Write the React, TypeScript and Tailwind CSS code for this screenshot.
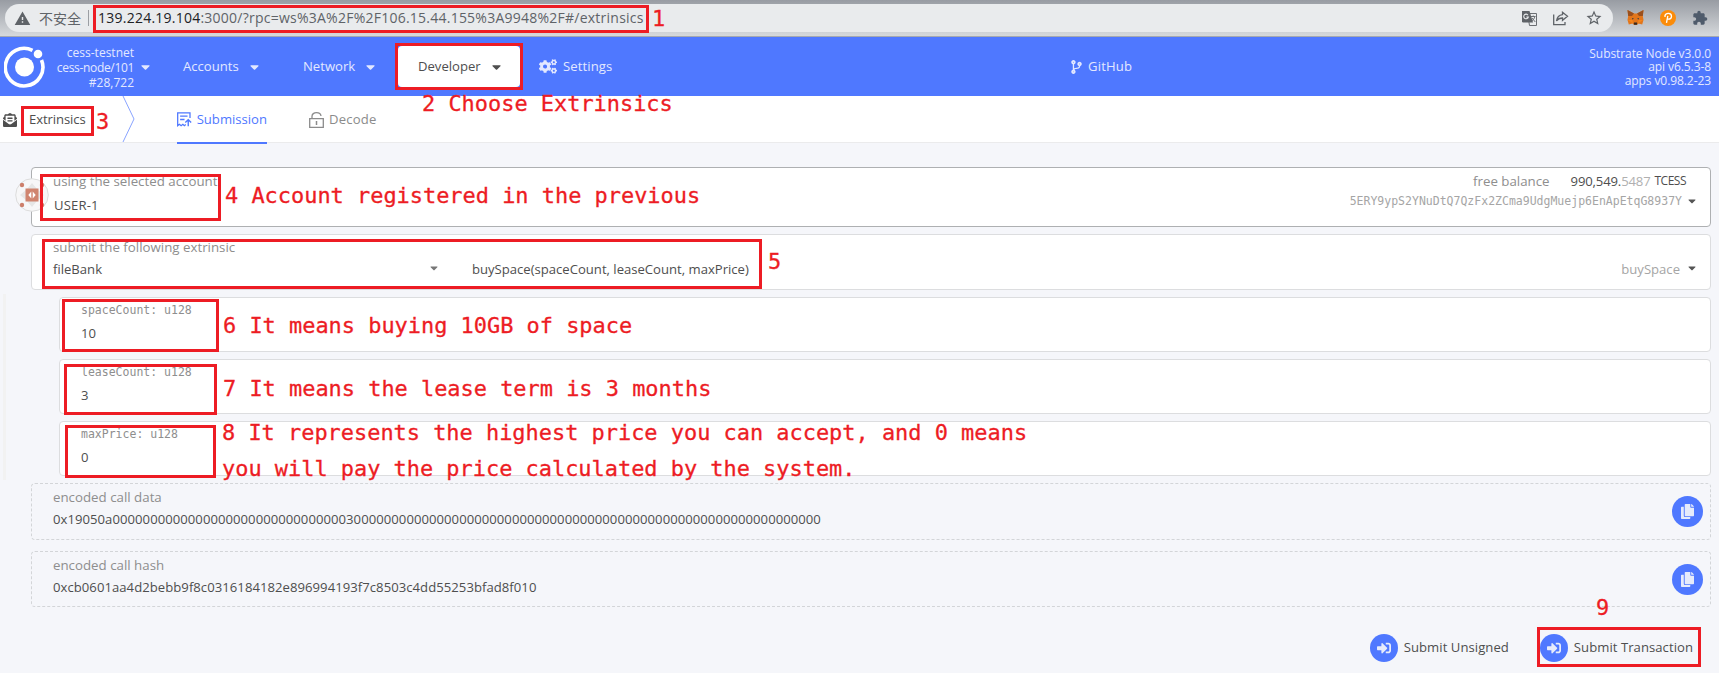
import React from 'react';
import { FaCaretDown, FaCodeBranch, FaCogs, FaCopy, FaEnvelopeOpenText, FaSignInAlt } from 'react-icons/fa';
import { MdExtension, MdStarBorder, MdWarning } from 'react-icons/md';

const CALL_DATA = '0x19050a' + '0'.repeat(31) + '3' + '0'.repeat(62);
const CALL_HASH = '0xcb0601aa4d2bebb9f8c0316184182e896994193f7c8503c4dd55253bfad8f010';

function TranslateIcon() {
  return (
    <svg className="h-[15px] w-[15px]" viewBox="0 0 15 15">
      <path d="M5.5 2.5h9v12h-7z" fill="none" stroke="#6b6e73" />
      <path d="M0 0h7.5l3.5 11.5H1.200A1.200 1.200 0 0 1 0 10.300z" fill="#5f6368" />
      <path d="M6 4.200A2.300 2.300 0 1 0 6.300 6H4.300" fill="none" stroke="#e9ebed" strokeWidth="1.100" />
      <path d="M9 5.500h4.500M11.200 4.500v1M12.800 5.500c-.4 2-1.500 3.500-3 4.500M10 7l3.300 4" fill="none" stroke="#6b6e73" />
    </svg>
  );
}

function ShareIcon() {
  return (
    <svg className="h-[15px] w-[16px]" viewBox="0 0 16 15">
      <path
        d="M.7 3.500V13.700H12V11M9.500 1.300l5 4-5 4V7C6.500 7 4.800 8 3.500 10 4 6.500 6 4 9.500 3.600z"
        fill="none"
        stroke="#5f6368"
        strokeWidth="1.300"
      />
    </svg>
  );
}

function FoxIcon() {
  return (
    <svg className="h-[16px] w-[17px]" viewBox="0 0 17 16">
      <path d="M.5 0 7 3.500h3L16.500 0l-.7 6 .7 4-1.300 4.500-3.700-1L9.800 15H7.200l-1.700-1.500-3.700 1L.5 10l.7-4z" fill="#e2761b" />
      <path d="M.5 0 7 3.500 5 6 1.200 6zM16.500 0 10 3.500 12 6l3.800 0z" fill="#9a4f1c" />
      <path d="M1 10l4.500 0 .5 3.500M16 10l-4.500 0-.5 3.500" fill="#f6851b" />
      <path d="M5 8l2 .8-1.600.6zM12 8l-2 .8 1.600.6z" fill="#233447" />
      <path d="M7 12.600h3l.3 1.600-.6.600H7.300l-.6-.6z" fill="#3a2a20" />
    </svg>
  );
}

function CoinIcon() {
  return (
    <svg className="h-[16px] w-[16px]" viewBox="0 0 16 16">
      <circle cx="8" cy="8" r="8" fill="#fb8c0a" />
      <path d="M5 7V5.500C5.500 3.800 7 3.200 8.500 3.300c1.800.1 3 1.200 3 2.900 0 1.800-1.300 3-3.200 3H7.200M7.800 5.800 6.500 12.800" fill="none" stroke="#fff" strokeWidth="1.300" />
    </svg>
  );
}

function NodeLogo() {
  return (
    <svg className="h-[42px] w-[41px]" viewBox="0 0 41 42">
      <path d="M28.500 4.300A18.800 18.800 0 1 0 37.500 14" fill="none" stroke="#fff" strokeWidth="3.600" />
      <circle cx="20.500" cy="21" r="9.500" fill="#fff" />
      <circle cx="34" cy="8" r="4.300" fill="#fff" />
    </svg>
  );
}

function SubmissionIcon() {
  return (
    <svg className="h-[15px] w-[15px]" viewBox="0 0 15 15">
      <path d="M13.300 6V.7H.7V13.800L2.500 12.400 4.200 13.800 6 12.400 7.500 13.800 9 12.600" fill="none" stroke="#4f78ff" strokeWidth="1.300" />
      <path d="M3.200 4h7.600M3.200 7.500h4.500M11.500 14.500V8M8.500 10.500l3-2.800 3 2.800" fill="none" stroke="#4f78ff" strokeWidth="1.400" />
    </svg>
  );
}

function DecodeIcon() {
  return (
    <svg className="h-[16px] w-[15px]" viewBox="0 0 15 16">
      <path d="M.7 6.700h13.600v8.600H.7zM3 6.500V4.200C3 2 5 .7 7.500.7S11.800 2 12 4" fill="none" stroke="#8b8b8b" strokeWidth="1.300" />
      <path d="M7.500 9v4" stroke="#8b8b8b" strokeWidth="1.500" />
    </svg>
  );
}

function AccountIdenticon() {
  return (
    <svg className="h-[34px] w-[34px]" viewBox="0 0 34 34">
      <circle cx="17" cy="17" r="16.300" fill="#f7f7f8" stroke="#dcdcdc" />
      <path d="M17 5l5 6H12zM17 29l5-6H12zM5 17l6-5v10zM29 17l-6-5v10z" fill="#e6e6e6" />
      <rect x="10.500" y="10.500" width="13" height="13" fill="#d08570" />
      <path d="M16.300 13.500v7L13.300 17zM17.700 13.500v7l3-3.500z" fill="#fff" />
      <g fill="#cd7f6b">
        <circle cx="7" cy="7" r="2.200" />
        <circle cx="27" cy="7" r="2.200" />
        <circle cx="7" cy="27" r="2.200" />
        <circle cx="27" cy="27" r="2.200" />
      </g>
    </svg>
  );
}

function BrowserBar() {
  return (
    <div className="h-[37px] border-b border-[#a5a9af] bg-linear-to-b from-[#989ca3] to-[#d6d9dc] pt-1">
      <div className="flex h-7 items-center">
        <div className="ml-[5px] flex h-7 w-[1608px] shrink-0 items-center rounded-full bg-[#e9ebed] pl-[9px] text-[#5f6368]">
          <MdWarning className="h-[17px] w-[17px] shrink-0" />
          <span className="ml-2 w-[43px] shrink-0 font-['Noto_Sans_CJK_SC',sans-serif] text-[14px] leading-5">不安全</span>
          <span className="ml-1.5 h-4 w-px bg-[#9b9ea3]" />
          <span className="ml-[9px] whitespace-nowrap text-[14px] leading-5 tracking-[0.240px]">
            <span className="text-[#202124]">139.224.19.104</span>:3000/?rpc=ws%3A%2F%2F106.15.44.155%3A9948%2F#/extrinsics
          </span>
          <div className="ml-auto mr-[10px] flex items-center gap-[16px]">
            <TranslateIcon />
            <ShareIcon />
            <MdStarBorder className="h-[18px] w-[18px]" />
          </div>
        </div>
        <div className="ml-[14px] flex items-center gap-4">
          <FoxIcon />
          <CoinIcon />
          <MdExtension className="h-4 w-4 text-[#4f5b6b]" />
        </div>
      </div>
    </div>
  );
}

function NavBar() {
  return (
    <div className="flex h-[59px] items-center bg-[#4f78ff] pt-px text-[13.100px] text-[#e3e8ff]">
      <div className="ml-[4px] w-[41px] shrink-0"><NodeLogo /></div>
      <div className="w-[89px] shrink-0 whitespace-nowrap text-right text-[12px] leading-[15px]">
        <div>cess-testnet</div>
        <div className="tracking-[-0.330px]">cess-node/101</div>
        <div>#28,722</div>
      </div>
      <FaCaretDown className="ml-[5px] h-[14px] w-[13px] shrink-0" />
      <div className="ml-[31px] flex w-[120px] shrink-0 items-center">
        <span className="w-[65px]">Accounts</span>
        <FaCaretDown className="h-[14px] w-[13px]" />
      </div>
      <div className="flex w-[95px] shrink-0 items-center">
        <span className="w-[61px]">Network</span>
        <FaCaretDown className="h-[14px] w-[13px]" />
      </div>
      <div className="-mt-px flex h-[41px] w-[122px] shrink-0 items-center rounded bg-white pl-[20px] pt-px text-[#4e4e4e]">
        <span className="w-[72px]">Developer</span>
        <FaCaretDown className="h-[14px] w-[13px]" />
      </div>
      <div className="ml-[19px] flex w-[532px] shrink-0 items-center">
        <FaCogs className="h-[15px] w-[18px]" />
        <span className="ml-[6px] tracking-[0.100px]">Settings</span>
      </div>
      <div className="flex items-center">
        <FaCodeBranch className="h-[14px] w-[11px]" />
        <span className="ml-[6px] tracking-[0.150px]">GitHub</span>
      </div>
      <div className="ml-auto mr-2 text-right text-[12px] leading-[13.500px] tracking-[-0.080px]">
        <div>Substrate Node v3.0.0</div>
        <div>api v6.5.3-8</div>
        <div>apps v0.98.2-23</div>
      </div>
    </div>
  );
}

function TabBar() {
  return (
    <div className="flex h-[47px] border-b border-[#ebebec] bg-white text-[13.100px] text-[#4e4e4e]">
      <div className="flex w-[122px] shrink-0 items-center pl-[3px] pt-px">
        <FaEnvelopeOpenText className="h-[14px] w-[14px]" />
        <span className="ml-[12px] tracking-[-0.100px]">Extrinsics</span>
      </div>
      <svg className="h-[46px] w-[13px] shrink-0" viewBox="0 0 13 46">
        <path d="M1 0 12 23 1 46" fill="none" stroke="#89a4ff" />
      </svg>
      <div className="ml-[42px] flex h-[48px] w-[90px] shrink-0 items-center border-b-2 border-[#4f78ff] pt-px text-[#4f78ff]">
        <SubmissionIcon />
        <span className="ml-[5px]">Submission</span>
      </div>
      <div className="ml-[42px] flex items-center pt-px text-[#8b8b8b]">
        <DecodeIcon />
        <span className="ml-[5px] tracking-[0.200px]">Decode</span>
      </div>
    </div>
  );
}

function Param({ label, value }: { label: string; value: string }) {
  return (
    <div className="h-[55px] rounded border border-[#dcdddf] bg-white pl-[21px] pt-[4px]">
      <div className="font-['DejaVu_Sans_Mono',monospace] text-[11.500px] leading-4 text-[#8e8e8e]">{label}</div>
      <div className="mt-[5px] leading-5">{value}</div>
    </div>
  );
}

function Output({ label, value, className }: { label: string; value: string; className: string }) {
  return (
    <div className={'flex justify-between rounded border border-dashed border-[#d3d5d8] pl-[21px] pr-[7px] ' + className}>
      <div className="pt-[3px]">
        <div className="text-[13.300px] leading-5 text-[#8e8e8e]">{label}</div>
        <div className="mt-[2px] leading-5 tracking-[0.050px]">{value}</div>
      </div>
      <span className="mt-3 flex h-[31px] w-[31px] items-center justify-center rounded-full bg-[#4f78ff] text-[#e6ebfb]">
        <FaCopy className="h-[15px] w-[13px]" />
      </span>
    </div>
  );
}

function SubmitButton({ label }: { label: string }) {
  return (
    <div className="flex items-center gap-[6px]">
      <span className="flex h-7 w-7 items-center justify-center rounded-full bg-[#4f78ff] text-[#e6ebfb]">
        <FaSignInAlt className="h-[14px] w-[14px]" />
      </span>
      <span className="tracking-[0.050px]">{label}</span>
    </div>
  );
}

function Frame({ className }: { className: string }) {
  return <div className={'pointer-events-none absolute border-3 border-[#ed1c24] ' + className} />;
}

function Note({ className, children }: { className: string; children: React.ReactNode }) {
  return (
    <div
      className={
        "pointer-events-none absolute whitespace-pre font-['DejaVu_Sans_Mono',monospace] text-[21.930px] leading-6 text-[#ed1c24] [-webkit-text-stroke:0.300px_#ed1c24] " +
        className
      }
    >
      {children}
    </div>
  );
}

export default function App() {
  return (
    <div className="relative h-[673px] w-[1719px] overflow-hidden bg-[#f5f6fa] font-['Open_Sans','Noto_Sans',sans-serif] text-[13.100px] text-[#4e4e4e]">
      <BrowserBar />
      <NavBar />
      <TabBar />

      <main className="flex flex-col pl-[31px] pr-2 pt-6">
        <section className="relative flex h-[60px] justify-between rounded border border-[#aeb0b2] bg-white pl-[21px] pr-[12px]">
          <div className="absolute -left-[17px] top-[10px]"><AccountIdenticon /></div>
          <div className="pt-[3px]">
            <div className="text-[13.300px] leading-5 text-[#8e8e8e]">using the selected account</div>
            <div className="ml-px mt-[4px] leading-5 tracking-[0.150px]">USER-1</div>
          </div>
          <div className="flex flex-col items-end pt-[3px]">
            <div className="flex pr-[12px] leading-5">
              <span className="mr-[21px] text-[13.300px] text-[#8e8e8e]">free balance</span>
              <span className="tracking-[-0.150px]">990,549.</span>
              <span className="tracking-[-0.150px] text-[#b0b0b0]">5487</span>
              <span className="ml-1 text-[12px] tracking-[-0.500px]">TCESS</span>
            </div>
            <div className="flex items-center pt-px font-['DejaVu_Sans_Mono',monospace] text-[11.500px] leading-[18px] text-[#a5a5a5]">
              5ERY9ypS2YNuDtQ7QzFx2ZCma9UdgMuejp6EnApEtqG8937Y
              <FaCaretDown className="ml-[4px] h-3 w-[12px] text-[#555]" />
            </div>
          </div>
        </section>

        <section className="mt-[7px] h-[56px] rounded border border-[#dcdddf] bg-white pl-[21px] pr-[12px] pt-[2px]">
          <div className="text-[13.300px] leading-5 text-[#8e8e8e]">submit the following extrinsic</div>
          <div className="mt-[2px] flex items-center leading-5">
            <span className="w-[375px]">fileBank</span>
            <FaCaretDown className="-mt-[2px] h-3 w-[12px] text-[#777]" />
            <span className="ml-[32px]">buySpace(spaceCount, leaseCount, maxPrice)</span>
            <span className="ml-auto text-[#a5a5a5]">buySpace</span>
            <FaCaretDown className="-mt-[2px] ml-[6px] h-3 w-[12px] text-[#555]" />
          </div>
        </section>

        <div className="-ml-7 mt-1 flex h-[186px] border-l-3 border-[#f2f2f2] pl-[53px] pt-[3px]">
          <div className="flex flex-1 flex-col gap-[7px]">
            <Param label="spaceCount: u128" value="10" />
            <Param label="leaseCount: u128" value="3" />
            <Param label="maxPrice: u128" value="0" />
          </div>
        </div>

        <Output className="mt-[3px] h-[57px]" label="encoded call data" value={CALL_DATA} />
        <Output className="mt-[11px] h-[56px]" label="encoded call hash" value={CALL_HASH} />

        <div className="mt-[27px] flex justify-end gap-[31px] pr-[18px]">
          <SubmitButton label="Submit Unsigned" />
          <SubmitButton label="Submit Transaction" />
        </div>
      </main>

      <Frame className="left-[93px] top-[5px] h-7 w-[556px]" />
      <Frame className="left-[395px] top-[43px] h-[47px] w-[128px]" />
      <Frame className="left-[21px] top-[106px] h-[30px] w-[73px]" />
      <Frame className="left-[40px] top-[174px] h-[47px] w-[181px]" />
      <Frame className="left-[42px] top-[239px] h-[50px] w-[720px]" />
      <Frame className="left-[62px] top-[299px] h-[53px] w-[157px]" />
      <Frame className="left-[64px] top-[364px] h-[51px] w-[153px]" />
      <Frame className="left-[65px] top-[425px] h-[53px] w-[151px]" />
      <Frame className="left-[1537px] top-[627px] h-[40px] w-[164px]" />

      <Note className="left-[652px] top-[7px]">1</Note>
      <Note className="left-[422px] top-[92px]">2 Choose Extrinsics</Note>
      <Note className="left-[96px] top-[110px]">3</Note>
      <Note className="left-[225px] top-[184px]">4 Account registered in the previous</Note>
      <Note className="left-[768px] top-[250px]">5</Note>
      <Note className="left-[223px] top-[314px]">6 It means buying 10GB of space</Note>
      <Note className="left-[223px] top-[377px]">7 It means the lease term is 3 months</Note>
      <Note className="left-[222px] top-[421px]">8 It represents the highest price you can accept, and 0 means</Note>
      <Note className="left-[222px] top-[457px]">you will pay the price calculated by the system.</Note>
      <Note className="left-[1596px] top-[596px]">9</Note>
    </div>
  );
}
